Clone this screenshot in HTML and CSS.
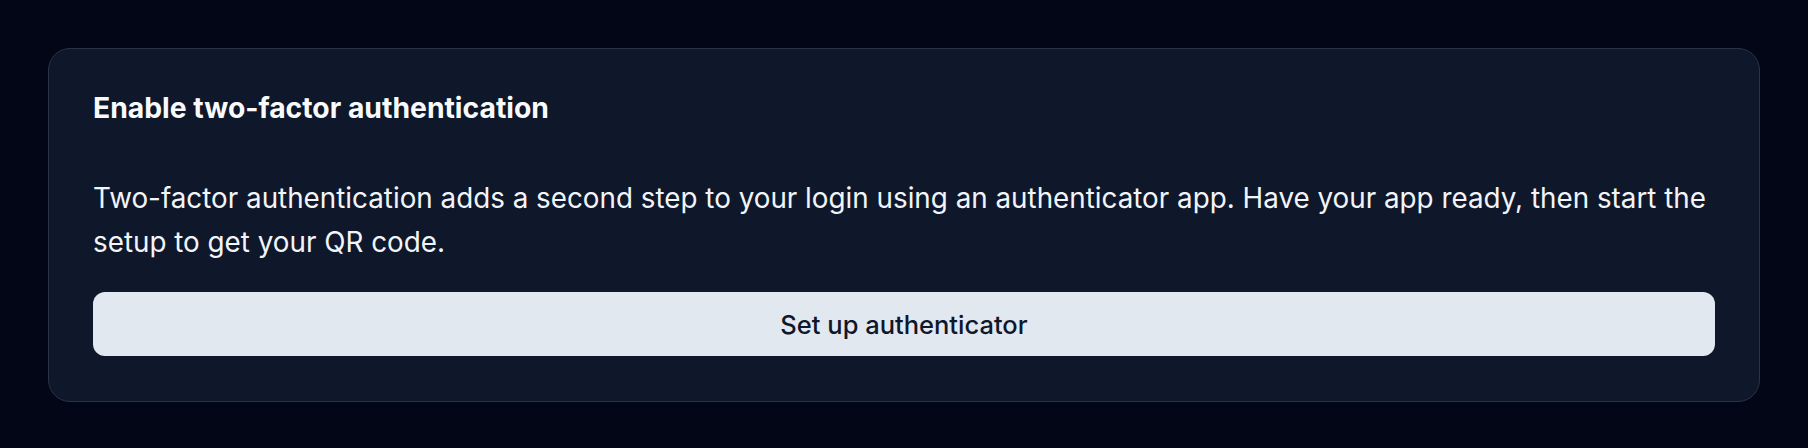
FILE: index.html
```html
<!DOCTYPE html>
<html lang="en">
<head>
    <meta charset="UTF-8">
    <meta name="viewport" content="width=device-width, initial-scale=1.0">
    <title>Two-factor authentication</title>
    <link rel="stylesheet" href="styles.css">
</head>
<body>
    <div class="card">
        <h2 class="card-title">Enable two-factor authentication</h2>

        <p class="card-text">Two-factor authentication adds a second step to your login using an authenticator app. Have your app ready, then start the setup to get your QR code.</p>

        <button class="setup-button" type="button">Set up authenticator</button>
    </div>
</body>
</html>
```

FILE: styles.css
```css
body {
    font-family: 'Inter', 'Noto Sans', sans-serif;
    background-color: #020617;
    margin: 0;
    padding: 48px;
}

.card {
    background-color: #0f172a;
    border: 1px solid #2a3344;
    border-radius: 22px;
    padding: 44px 44px 45px;
}

.card-title {
    margin: 0 0 53px;
    font-size: 28.3px;
    font-weight: 700;
    line-height: 31px;
    color: #f8fafc;
}

.card-text {
    margin: 0 0 28px;
    font-size: 27.8px;
    line-height: 43.5px;
    color: #f1f5f9;
}

.setup-button {
    display: block;
    width: 100%;
    height: 64px;
    font-family: inherit;
    font-size: 25.5px;
    font-weight: 500;
    color: #0f172a;
    background-color: #e2e8f0;
    border: none;
    border-radius: 12px;
    cursor: pointer;
}

.setup-button:hover {
    background-color: #cbd5e1;
}
```
